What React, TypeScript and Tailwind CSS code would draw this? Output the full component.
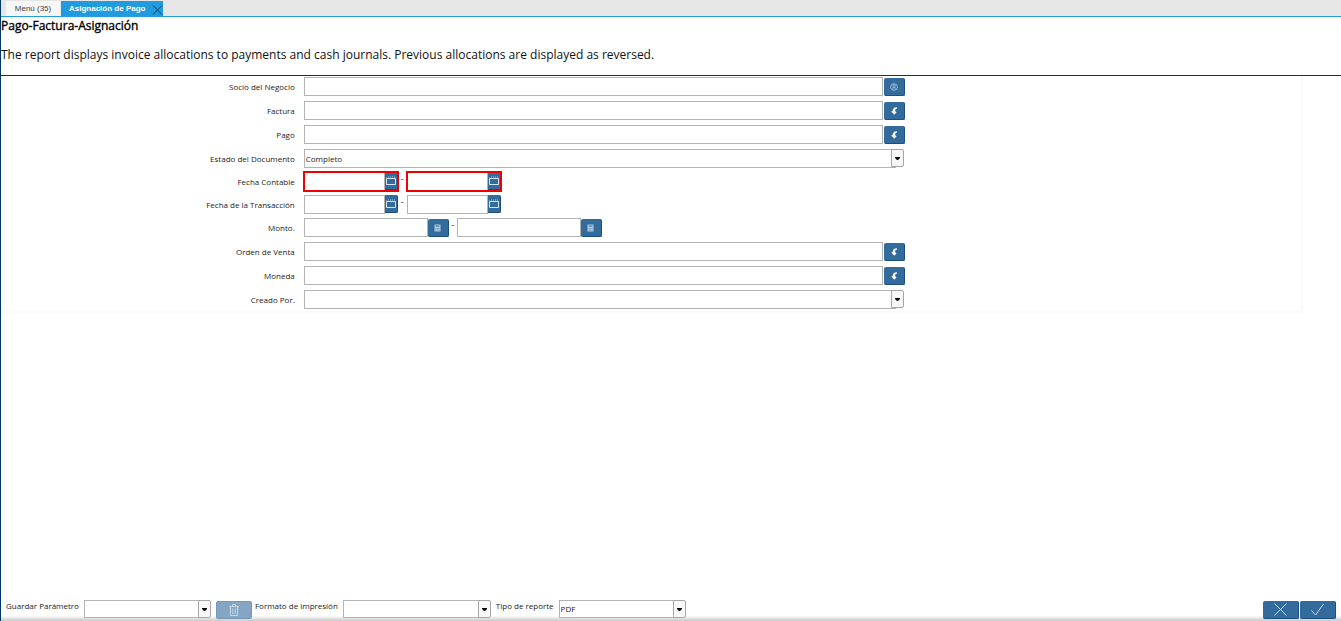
import type { ReactNode } from 'react';

const inputBox = 'h-[19px] min-w-0 rounded-none border border-[#b3b3b3] bg-white px-px text-[8px] text-[#222] outline-none';
const blueButton =
  'flex h-[18px] w-[21px] shrink-0 items-center justify-center rounded-[2px] border-r border-b border-[#1c4f7c] bg-[#326b9c] text-white';

function Row({ id, label, short, children }: { id: string; label: string; short?: boolean; children: ReactNode }) {
  return (
    <div className={`grid grid-cols-[303fr_602fr_396fr] items-start ${short ? 'h-[23px]' : 'h-6'}`}>
      <label htmlFor={id} className="pt-[3px] pr-[9px] text-right text-[8px] leading-[13px] text-[#222]">
        {label}
      </label>
      <div className="flex min-w-0 items-start">{children}</div>
    </div>
  );
}

function Combo({ id, options, className }: { id: string; options: string[]; className: string }) {
  return (
    <div className={`relative pr-2 ${className}`}>
      <select
        id={id}
        className="block h-full w-full appearance-none rounded-none border border-[#b3b3b3] bg-white px-px text-[8px] text-[#222] outline-none"
      >
        {options.map((o) => (
          <option key={o}>{o}</option>
        ))}
      </select>
      <span className="pointer-events-none absolute top-0 right-0 flex h-[18px] w-[13px] items-center justify-center rounded-r-[2px] border border-[#a6a6a6] bg-[#f8f8f8]">
        <svg width="5" height="3" viewBox="0 0 5 3">
          <path d="M0 0h5v1L3 3H2L0 1z" fill="#000" />
        </svg>
      </span>
    </div>
  );
}

function ReturnIcon() {
  return (
    <svg width="7" height="8" viewBox="0 0 7 8" fill="#fff">
      <path d="M6 0.2C3.2 0.2 1.9 1.3 1.9 3.6L0.3 4.4 3.3 7.8 5.6 5.3 4.1 4.3C4 2.6 4.6 1.7 6.2 1.2z" />
    </svg>
  );
}

function PartnerIcon() {
  return (
    <svg width="8" height="8" viewBox="0 0 8 8" fill="none" stroke="#a9c4da" strokeWidth="0.8">
      <circle cx="4" cy="4" r="3.4" />
      <path d="M3 1.8h2v2.6H3zM3 6.4V4.4M5 6.4V4.4" />
    </svg>
  );
}

function CalcIcon() {
  return (
    <svg width="7" height="8" viewBox="0 0 7 8">
      <rect x="0.5" y="0.5" width="6" height="7" fill="#b5cde0" />
      <path d="M1.5 2h4" stroke="#326b9c" />
      <path d="M1.5 4.5h4M1.5 6.2h4" stroke="#5585ae" strokeWidth="0.8" strokeDasharray="1 0.5" />
    </svg>
  );
}

function CalendarIcon() {
  return (
    <svg className="shrink-0" width="10" height="10" viewBox="0 0 10 10" fill="none">
      <path d="M0.5 2.5h9v6h-9z" stroke="#d5e4f0" />
      <path d="M0.5 2V1M2.5 2V0M4.5 2V0M6.5 2V0M8.5 2V0" stroke="#6f9abd" />
    </svg>
  );
}

function LookupRow({ id, label, icon }: { id: string; label: string; icon?: ReactNode }) {
  return (
    <Row id={id} label={label}>
      <input id={id} type="text" className={`${inputBox} flex-1`} />
      <button type="button" aria-label={`Buscar ${label}`} className={`${blueButton} mt-px ml-px`}>
        {icon ?? <ReturnIcon />}
      </button>
    </Row>
  );
}

function DateBox({ id, label, required }: { id: string; label: string; required?: boolean }) {
  return (
    <div className={`relative flex h-[19px] w-[94px] ${required ? 'outline-2 -outline-offset-1 outline-[#f00000]' : ''}`}>
      <input id={id} type="text" aria-label={label} className={`${inputBox} w-[81px]`} />
      <button
        type="button"
        aria-label={`Calendario ${label}`}
        className="flex h-[18px] w-[13px] shrink-0 items-center justify-center rounded-r-[2px] border-r border-b border-[#1c4f7c] bg-[#326b9c]"
      >
        <CalendarIcon />
      </button>
    </div>
  );
}

function DateRow({ id, label, required }: { id: string; label: string; required?: boolean }) {
  return (
    <Row id={id} label={label} short>
      <DateBox id={id} label={`${label} desde`} required={required} />
      <span className="w-[9px] text-center text-[9px] leading-[13px] text-[#333]">-</span>
      <DateBox id={`${id}-hasta`} label={`${label} hasta`} required={required} />
    </Row>
  );
}

function AmountBox({ id, label }: { id: string; label: string }) {
  return (
    <div className="flex">
      <input id={id} type="text" aria-label={label} className={`${inputBox} w-[124px]`} />
      <button type="button" aria-label={`Calculadora ${label}`} className={`${blueButton} mt-px`}>
        <CalcIcon />
      </button>
    </div>
  );
}

export default function App() {
  return (
    <div className="flex min-h-screen flex-col border-l border-[#003764] bg-white font-['Open_Sans','Noto_Sans',sans-serif]">
      <nav className="flex h-[17px] items-end border-b border-[#239ee0] bg-[#e6e6e6] pl-[5px] font-['Liberation_Sans',Arial,sans-serif] text-[8px]">
        <a href="#menu" className="flex h-[15px] w-[54px] items-center justify-center bg-[#f7f7f7] text-[#444]">
          Menú (35)
        </a>
        <a href="#asignacion" className="ml-px flex h-[15px] w-[102px] items-center justify-between bg-[#1f9bde] pl-2 font-bold text-white">
          Asignación de Pago
          <svg className="mt-0.5" width="11" height="10" viewBox="0 0 11 10" stroke="#163a55" strokeWidth="0.9">
            <path d="M1 0.5l9 9M10 0.5l-9 9" />
          </svg>
        </a>
      </nav>

      <header className="border-b border-[#003764] text-black">
        <h1 className="pt-px text-[12px] leading-4 font-medium [-webkit-text-stroke:0.03em]">Pago-Factura-Asignación</h1>
        <p className="pt-3 pb-3 text-[12px] leading-[17px] text-[#111]">
          The report displays invoice allocations to payments and cash journals. Previous allocations are displayed as
          reversed.
        </p>
      </header>

      <main className="mr-[38px] border-r-2 border-b-2 border-[#fafafa] pt-px">
        <LookupRow id="socio" label="Socio del Negocio" icon={<PartnerIcon />} />
        <LookupRow id="factura" label="Factura" />
        <LookupRow id="pago" label="Pago" />
        <Row id="estado" label="Estado del Documento" short>
          <Combo id="estado" options={['Completo']} className="mr-px h-[19px] flex-1" />
        </Row>
        <DateRow id="contable" label="Fecha Contable" required />
        <DateRow id="transaccion" label="Fecha de la Transacción" />
        <Row id="monto" label="Monto.">
          <AmountBox id="monto" label="Monto desde" />
          <span className="w-2 text-center text-[9px] leading-[13px] text-[#333]">-</span>
          <AmountBox id="monto-hasta" label="Monto hasta" />
        </Row>
        <LookupRow id="orden" label="Orden de Venta" />
        <LookupRow id="moneda" label="Moneda" />
        <div className="-mb-0.5">
          <Row id="creado" label="Creado Por." short>
            <Combo id="creado" options={['']} className="mr-px h-[19px] flex-1" />
          </Row>
        </div>
      </main>

      <footer className="mt-auto flex h-[21px] items-start bg-linear-to-b from-white from-75% to-[#c9c9c9] pr-[5px] pl-[5px] text-[8px] leading-[12px] text-[#222]">
        <label htmlFor="guardar">Guardar Parámetro</label>
        <Combo id="guardar" options={['']} className="ml-[5px] h-[18px] w-[127px]" />
        <button
          type="button"
          aria-label="Eliminar"
          disabled
          className="mt-px ml-[5px] flex h-[18px] w-9 items-center justify-center rounded-[2px] border border-[#7598b8] bg-[#84a6c4]"
        >
          <svg width="10" height="12" viewBox="0 0 10 12" fill="none" stroke="#c5d6e4">
            <path d="M0 2.5h10M3.5 2V0.5h3V2M1.5 3v8.5h7V3M3.8 4.5v5.5M6.2 4.5v5.5" />
          </svg>
        </button>
        <label htmlFor="formato" className="ml-[3px]">
          Formato de impresión
        </label>
        <Combo id="formato" options={['']} className="ml-[5px] h-[18px] w-[148px]" />
        <label htmlFor="tipo" className="ml-[5px]">
          Tipo de reporte
        </label>
        <Combo id="tipo" options={['PDF']} className="ml-[5px] h-[18px] w-[127px]" />
        <div className="mt-px ml-auto flex gap-px">
          <button
            type="button"
            aria-label="Cancelar"
            className="flex h-[18px] w-9 items-center justify-center rounded-[2px] border-r border-b border-[#1c4f7c] bg-[#326b9c]"
          >
            <svg width="13" height="13" viewBox="0 0 13 13" stroke="#c8dbea">
              <path d="M0.5 0.5l12 12M12.5 0.5l-12 12" />
            </svg>
          </button>
          <button
            type="button"
            aria-label="Aceptar"
            className="flex h-[18px] w-9 items-center justify-center rounded-[2px] border-r border-b border-[#1c4f7c] bg-[#326b9c]"
          >
            <svg width="13" height="13" viewBox="0 0 13 13" fill="none" stroke="#c8dbea">
              <path d="M0.5 7.5l4 4.5L12.5 1" />
            </svg>
          </button>
        </div>
      </footer>
    </div>
  );
}
